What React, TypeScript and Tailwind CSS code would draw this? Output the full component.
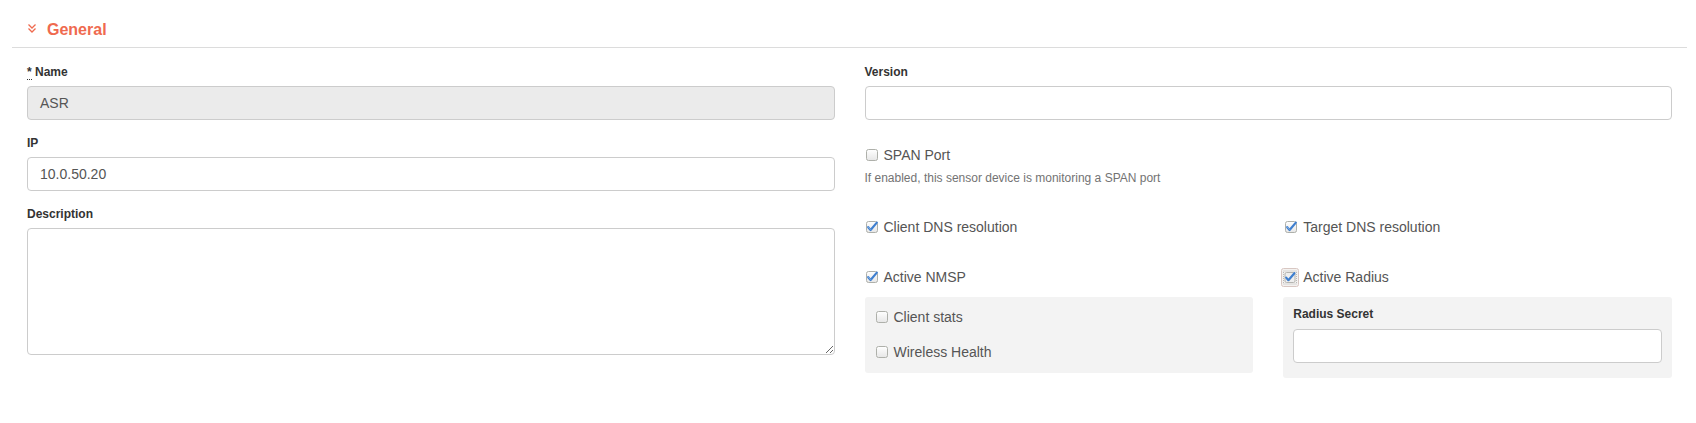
import React from "react";

const font = { fontFamily: '"Liberation Sans", Arial, sans-serif' };

function Box({ checked = false }: { checked?: boolean }) {
  return (
    <svg width="14" height="14" viewBox="0 0 14 14" className="shrink-0">
      <defs>
        <linearGradient id="cbg" x1="0" y1="0" x2="0" y2="1">
          <stop offset="0" stopColor="#ffffff" />
          <stop offset="1" stopColor="#e6e6e6" />
        </linearGradient>
      </defs>
      <rect x="1.5" y="1.5" width="11" height="11" rx="2" fill="url(#cbg)" stroke="#aeb0aa" />
      {checked && (
        <path
          d="M3.2 7.2 L5.6 10 L11.8 2.6"
          fill="none"
          stroke="#3f7fcf"
          strokeWidth="2.2"
          strokeLinecap="round"
          strokeLinejoin="round"
        />
      )}
      {checked && (
        <path d="M3.6 7.3 L5.6 9.4" fill="none" stroke="#9cc3ee" strokeWidth="0.8" strokeLinecap="round" />
      )}
    </svg>
  );
}

function FocusBox() {
  return (
    <svg width="18" height="19" viewBox="0 0 18 19" className="shrink-0">
      <rect x="0.5" y="0.5" width="17" height="18" rx="2" fill="#f4f2f0" stroke="#d8c7c2" />
      <rect x="2.5" y="3" width="13" height="13" fill="none" stroke="#b9b9b9" strokeDasharray="1 1" />
      <rect x="4" y="4.5" width="10" height="10" rx="1.5" fill="#eeeeee" stroke="#b4b4b0" />
      <path d="M5.2 9.6 L7.4 12.2 L13.4 5.2" fill="none" stroke="#3f7fcf" strokeWidth="2.2" strokeLinecap="round" strokeLinejoin="round" />
    </svg>
  );
}

function Check({ label, checked = false }: { label: string; checked?: boolean }) {
  return (
    <div className="flex h-5 items-center gap-[5px] text-[14px] text-[#555]">
      <Box checked={checked} />
      <span>{label}</span>
    </div>
  );
}

function Label({ children }: { children: React.ReactNode }) {
  return <div className="text-[12px] font-bold leading-[15px] text-[#333]">{children}</div>;
}

export default function App() {
  return (
    <div className="min-h-[423px] w-[1696px] bg-white" style={font}>
      <div className="ml-3 mr-[9px]">
        <div className="flex h-[48px] items-start border-b border-[#dcdcdc] pl-[15px] pt-[20px]">
          <svg width="10" height="12" viewBox="0 0 10 12" className="mt-[3px]">
            <path d="M1.5 1.5 L5 5 L8.5 1.5" fill="none" stroke="#ef6a4f" strokeWidth="1.3" />
            <path d="M1.5 5.5 L5 9 L8.5 5.5" fill="none" stroke="#ef6a4f" strokeWidth="1.3" />
          </svg>
          <span className="ml-[10px] text-[16px] font-bold leading-[20px] text-[#ef6a4f]">General</span>
        </div>

        <div className="flex pt-[17px]">
          {/* left column */}
          <div className="w-1/2 px-[15px]">
            <Label>
              <abbr className="border-b border-dotted border-[#333] no-underline" title="required">*</abbr> Name
            </Label>
            <div className="mt-[6px] flex h-[34px] items-center rounded-[4px] border border-[#cccccc] bg-[#ebebeb] px-3 text-[14px] text-[#555]">
              ASR
            </div>
            <div className="mt-[16px]">
              <Label>IP</Label>
            </div>
            <div className="mt-[6px] flex h-[34px] items-center rounded-[4px] border border-[#cccccc] bg-white px-3 text-[14px] text-[#555]">
              10.0.50.20
            </div>
            <div className="mt-[16px]">
              <Label>Description</Label>
            </div>
            <textarea
              className="mt-[6px] block h-[127px] w-full rounded-[4px] border border-[#cccccc] bg-white px-3 py-2 text-[14px] text-[#555] outline-none"
              style={font}
              defaultValue=""
            />
          </div>

          {/* right column */}
          <div className="w-1/2 px-[15px]">
            <Label>Version</Label>
            <div className="mt-[6px] h-[34px] rounded-[4px] border border-[#cccccc] bg-white" />
            <div className="mt-[25px]">
              <Check label="SPAN Port" />
            </div>
            <div className="mt-[6px] text-[12px] leading-[15px] text-[#737373]">
              If enabled, this sensor device is monitoring a SPAN port
            </div>

            <div className="mt-[31px] grid grid-cols-2 gap-x-[30px]">
              <div>
                <Check label="Client DNS resolution" checked />
                <div className="mt-[30px]">
                  <Check label="Active NMSP" checked />
                </div>
                <div className="mt-[10px] h-[76px] rounded-[3px] bg-[#f3f3f3] px-[10px] pt-[10px]">
                  <Check label="Client stats" />
                  <div className="mt-[15px]">
                    <Check label="Wireless Health" />
                  </div>
                </div>
              </div>
              <div>
                <div className="pl-[1px]">
                  <Check label="Target DNS resolution" checked />
                </div>
                <div className="mt-[30px] flex h-5 items-center gap-[4px] text-[14px] text-[#555]">
                  <div className="-ml-[2px]">
                    <FocusBox />
                  </div>
                  <span>Active Radius</span>
                </div>
                <div className="mt-[10px] rounded-[3px] bg-[#f3f3f3] px-[10px] pb-[15px] pt-[10px]">
                  <Label>Radius Secret</Label>
                  <div className="mt-[7px] h-[34px] rounded-[4px] border border-[#cccccc] bg-white" />
                </div>
              </div>
            </div>
          </div>
        </div>
      </div>
    </div>
  );
}
